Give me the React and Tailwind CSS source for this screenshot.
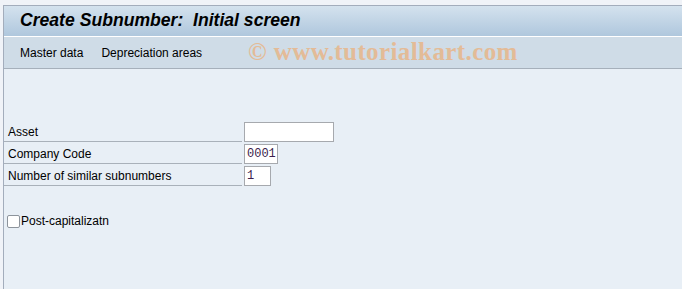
export default function App() {
  const rows = [
    { label: "Asset", value: "", w: "w-[90px]" },
    { label: "Company Code", value: "0001", w: "w-[34px]" },
    { label: "Number of similar subnumbers", value: "1", w: "w-[27px]" },
  ];

  return (
    <div className="h-[289px] w-[682px] overflow-hidden bg-[#f0f3f8] pt-[5px] pl-[3px] font-['Liberation_Sans',Arial,sans-serif] text-[12px] text-black">
      <div className="flex h-[284px] flex-col border-l border-t border-[#a3adbc] bg-[#e8eff6]">
        {/* Title bar */}
        <div className="flex h-[30px] items-center bg-gradient-to-b from-[#d4e2ee] to-[#afc7dd] pl-[16px]">
          <h1 className="text-[17.6px] font-bold italic leading-none text-black">
            Create Subnumber:&nbsp; Initial screen
          </h1>
        </div>

        {/* Toolbar */}
        <div className="relative flex h-[33px] items-center gap-[18px] border-t border-white border-b border-b-[#a6b0bb] bg-[#cfdce7] pl-[16px]">
          <span>Master data</span>
          <span>Depreciation areas</span>
          <span className="pointer-events-none absolute left-[244px] top-[0px] font-['Liberation_Serif',serif] text-[25px] font-bold leading-[30px] tracking-[0.4px] text-[#e9b484] opacity-80">
            © www.tutorialkart.com
          </span>
        </div>

        {/* Form */}
        <div className="mt-[53px] flex flex-col gap-[2px]">
          {rows.map((r) => (
            <div key={r.label} className="flex h-[20px] items-stretch">
              <div className="flex w-[238px] items-center border-b border-[#a9b1ba] pl-[4px]">
                {r.label}
              </div>
              <div className="w-[2px]" />
              <div
                className={`${r.w} flex items-center border border-[#a6a9ae] bg-white pl-[2px] font-['Liberation_Mono',monospace] text-[12px] text-[#3b1d4d]`}
              >
                {r.value}
              </div>
            </div>
          ))}
        </div>

        {/* Checkbox */}
        <label className="mt-[26px] flex items-center gap-[1px] pl-[3px]">
          <span className="h-[13px] w-[13px] rounded-[2px] border border-[#8d949c] bg-white" />
          <span>Post-capitalizatn</span>
        </label>
      </div>
    </div>
  );
}
